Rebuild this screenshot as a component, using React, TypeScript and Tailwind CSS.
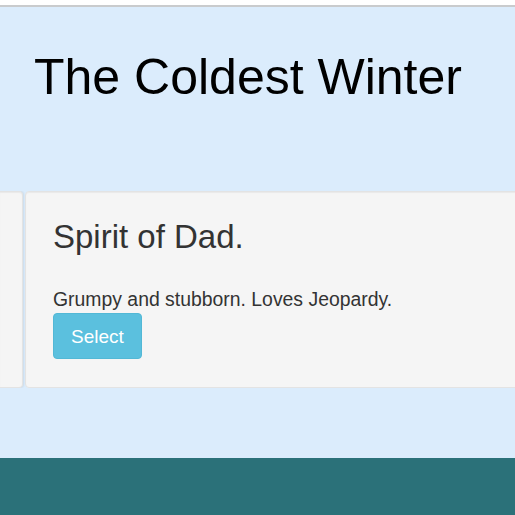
import React from "react";

const App: React.FC = () => {
  return (
    <div className="min-h-screen bg-white font-['Liberation_Sans',Arial,sans-serif]">
      <div className="h-[5px] bg-white" />
      <div className="h-[2px] bg-[#c9cbcd]" />

      <section className="bg-[#dbecfc] pt-[42px] pb-[70px]">
        <h1 className="px-[34px] text-[50px] leading-[56px] text-black font-normal">
          The Coldest Winter
        </h1>

        <div className="mt-[86px] flex gap-[2px] overflow-hidden">
          <div className="w-[23px] shrink-0 bg-[#f5f5f5] border border-l-0 border-[#e3e3e3] rounded-r-[4px] shadow-[inset_0_1px_1px_rgba(0,0,0,0.05),1px_0_2px_rgba(0,0,0,0.08)]" />

          <div className="flex-1 min-w-[520px] bg-[#f5f5f5] border border-[#e3e3e3] rounded-[4px] pl-[27px] pt-[27px] pb-[28px] text-[#333] shadow-[inset_0_1px_1px_rgba(0,0,0,0.05)]">
            <h3 className="text-[33px] leading-[36px] font-normal">Spirit of Dad.</h3>
            <p className="mt-[31px] text-[19.4px] leading-[27px]">
              Grumpy and stubborn. Loves Jeopardy.
            </p>
            <button
              type="button"
              className="h-[46px] w-[89px] rounded-[4px] bg-[#5bc0de] border border-[#52b8d6] text-white text-[19px] leading-none"
            >
              Select
            </button>
          </div>
        </div>
      </section>

      <footer className="h-[80px] bg-[#2b7179]" />
    </div>
  );
};

export default App;
